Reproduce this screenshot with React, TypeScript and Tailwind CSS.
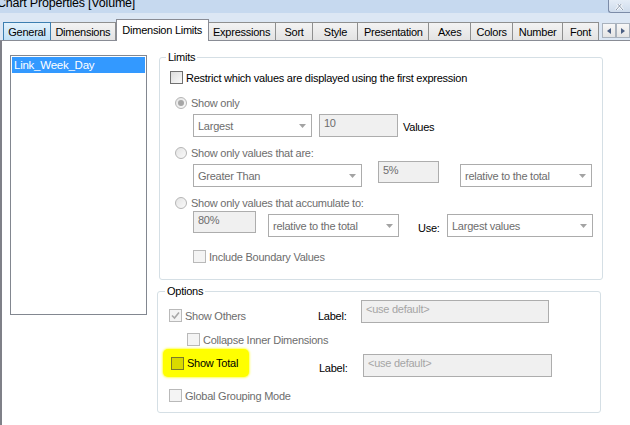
import React from "react";

const tabs: { label: string; w: string; kind: "normal" | "hover" | "selected" }[] = [
  { label: "General", w: "w-[48px]", kind: "hover" },
  { label: "Dimensions", w: "w-[65px]", kind: "normal" },
  { label: "Dimension Limits", w: "w-[93px]", kind: "selected" },
  { label: "Expressions", w: "w-[67px]", kind: "normal" },
  { label: "Sort", w: "w-[38px]", kind: "normal" },
  { label: "Style", w: "w-[45px]", kind: "normal" },
  { label: "Presentation", w: "w-[71px]", kind: "normal" },
  { label: "Axes", w: "w-[42px]", kind: "normal" },
  { label: "Colors", w: "w-[42px]", kind: "normal" },
  { label: "Number", w: "w-[50px]", kind: "normal" },
  { label: "Font", w: "w-[36px]", kind: "normal" },
];

function Check({ checked, disabled, yellow }: { checked?: boolean; disabled?: boolean; yellow?: boolean }) {
  const cls = yellow
    ? "border-[#7a7a2a] bg-[#d9d900]"
    : disabled
    ? "border-[#b9b9b9] bg-[#f4f4f4]"
    : "border-[#707070] bg-gradient-to-br from-[#dcdcdc] to-[#fafafa]";
  return (
    <div className={`w-[13px] h-[13px] shrink-0 border flex items-center justify-center ${cls}`}>
      {checked && (
        <svg width="9" height="9" viewBox="0 0 9 9">
          <path d="M1 4.5 L3.5 7 L8 1.5" stroke="#a8a8a8" strokeWidth="1.6" fill="none" />
        </svg>
      )}
    </div>
  );
}

function Radio({ selected }: { selected?: boolean }) {
  return (
    <div className="w-[12px] h-[12px] shrink-0 rounded-full border border-[#b5b5b5] bg-gradient-to-br from-[#e4e4e4] to-[#fafafa] flex items-center justify-center">
      {selected && <div className="w-[6px] h-[6px] rounded-full bg-[#a6a6a6]" />}
    </div>
  );
}

function Combo({ text, w, extra = "" }: { text: string; w: string; extra?: string }) {
  return (
    <div className={`${w} h-[23px] shrink-0 border border-[#acacac] bg-white flex items-center pl-[4px] pr-[5px] ${extra}`}>
      <span className="flex-1 text-[#6d6d6d] whitespace-nowrap">{text}</span>
      <svg width="7" height="4" viewBox="0 0 7 4">
        <path d="M0 0 H7 L3.5 4 Z" fill="#a3a3a3" />
      </svg>
    </div>
  );
}

function Input({ text, w, h = "h-[23px]", light, extra = "" }: { text: string; w: string; h?: string; light?: boolean; extra?: string }) {
  return (
    <div
      className={`${w} ${h} shrink-0 border border-[#adadad] bg-[#f0f0f0] pl-[4px] pt-[1px] leading-[15px] whitespace-nowrap ${
        light ? "text-[#a5a5a5]" : "text-[#6d6d6d]"
      } ${extra}`}
    >
      {text}
    </div>
  );
}

export default function App() {
  return (
    <div className="w-[630px] h-[425px] overflow-hidden bg-white text-[11px] tracking-[-0.25px] leading-[14px] text-black font-['Liberation_Sans',Arial,sans-serif] flex flex-col">
      {/* Title bar */}
      <div className="h-[13px] shrink-0 bg-[#c6d9ef] flex overflow-hidden">
        <div className="flex-1 overflow-hidden">
          <div className="ml-[-3px] mt-[-4px] text-[12.5px] leading-[14px] tracking-[-0.2px] whitespace-nowrap text-black">Chart Properties [Volume]</div>
        </div>
        <div className="w-[22px] h-[13px] border-l border-b border-[#7c8ca8] rounded-bl-[3px] bg-gradient-to-b from-[#e4ecf6] to-[#cfdcec] flex items-end justify-center pb-[2px]">
          <svg width="10" height="6" viewBox="0 0 10 6">
            <path d="M1 -2 L8 6 M8 -2 L1 6" stroke="#ffffff" strokeWidth="2.4" />
            <path d="M1 -2 L8 6 M8 -2 L1 6" stroke="#8a98ad" strokeWidth="1" />
          </svg>
        </div>
      </div>
      {/* band */}
      <div className="h-[6px] shrink-0 bg-[#dce7f4]" />
      {/* Tabs */}
      <div className="h-[22px] shrink-0 bg-[#dce7f4] border-b border-[#898c95] flex items-end pl-[3px]">
        {tabs.map((t, i) => {
          if (t.kind === "selected") {
            return (
              <div
                key={i}
                className={`${t.w} h-[22px] mb-[-1px] bg-white border-t border-l border-r border-[#898c95] flex items-center justify-center pb-[2px] whitespace-nowrap relative z-10`}
              >
                {t.label}
              </div>
            );
          }
          const bg =
            t.kind === "hover"
              ? "bg-gradient-to-b from-[#e3f2fc] to-[#bfe0f6] border-[#3c7fb1] border-l"
              : "bg-gradient-to-b from-[#f3f3f3] to-[#e3e3e3] border-[#8e8f8f]";
          return (
            <div
              key={i}
              className={`${t.w} h-[18px] border-t border-r ${bg} flex items-center justify-center whitespace-nowrap overflow-hidden`}
            >
              {t.label}
            </div>
          );
        })}
        <div className="flex ml-[3px] mb-[2px]">
          <div className="w-[14px] h-[15px] border border-[#a9b2bd] bg-gradient-to-b from-[#f7f7f7] to-[#e4e4e4] flex items-center justify-center">
            <svg width="4" height="6" viewBox="0 0 4 6"><path d="M4 0 V6 L0 3 Z" fill="#4b5f83" /></svg>
          </div>
          <div className="w-[14px] h-[15px] border border-[#a9b2bd] bg-gradient-to-b from-[#f7f7f7] to-[#e4e4e4] flex items-center justify-center">
            <svg width="4" height="6" viewBox="0 0 4 6"><path d="M0 0 V6 L4 3 Z" fill="#4b5f83" /></svg>
          </div>
        </div>
      </div>
      {/* Content */}
      <div className="flex-1 flex border-l-2 border-[#7f8088]">
        {/* List */}
        <div className="ml-[8px] mt-[14px] w-[137px] h-[260px] border border-[#828790] p-[1px] shrink-0">
          <div className="h-[16px] bg-[#3399ff] text-white pl-[2px] leading-[16px] text-[11.5px]">Link_Week_Day</div>
        </div>
        {/* Right column */}
        <div className="ml-[10px] flex flex-col">
          {/* Limits */}
          <fieldset className="ml-[2px] mt-[9px] w-[444px] border border-[#d5dfe5] rounded-[3px] pb-[16px]">
            <legend className="ml-[6px] px-[2px] h-[14px] leading-[14px]">Limits</legend>
            <div className="mt-[7px] ml-[10px] h-[13px] flex items-center">
              <Check />
              <span className="ml-[3px] whitespace-nowrap">Restrict which values are displayed using the first expression</span>
            </div>
            <div className="mt-[12px] ml-[15px] h-[13px] flex items-center">
              <Radio selected />
              <span className="ml-[4px] text-[#6d6d6d]">Show only</span>
            </div>
            <div className="mt-[5px] ml-[33px] h-[23px] flex items-center">
              <Combo text="Largest" w="w-[119px]" />
              <Input text="10" w="w-[79px]" extra="ml-[7px]" />
              <span className="ml-[5px] mt-[3px]">Values</span>
            </div>
            <div className="mt-[9px] ml-[15px] h-[13px] flex items-center">
              <Radio />
              <span className="ml-[4px] text-[#6d6d6d]">Show only values that are:</span>
            </div>
            <div className="mt-[2px] ml-[33px] h-[26px] flex items-start">
              <Combo text="Greater Than" w="w-[169px]" extra="mt-[3px]" />
              <Input text="5%" w="w-[61px]" h="h-[22px]" extra="ml-[16px]" />
              <Combo text="relative to the total" w="w-[132px]" extra="mt-[3px] ml-[21px]" />
            </div>
            <div className="mt-[9px] ml-[15px] h-[13px] flex items-center">
              <Radio />
              <span className="ml-[4px] text-[#6d6d6d]">Show only values that accumulate to:</span>
            </div>
            <div className="mt-[2px] ml-[33px] h-[26px] flex items-start">
              <Input text="80%" w="w-[63px]" h="h-[22px]" />
              <Combo text="relative to the total" w="w-[131px]" extra="mt-[3px] ml-[12px]" />
              <span className="ml-[19px] w-[29px] mt-[10px]">Use:</span>
              <Combo text="Largest values" w="w-[146px]" extra="mt-[3px]" />
            </div>
            <div className="mt-[13px] ml-[33px] h-[13px] flex items-center">
              <Check disabled />
              <span className="ml-[3px] text-[#6d6d6d]">Include Boundary Values</span>
            </div>
          </fieldset>
          {/* Options */}
          <fieldset className="mt-[4px] w-[444px] border border-[#d5dfe5] rounded-[3px] pb-[10px]">
            <legend className="ml-[7px] px-[2px] h-[14px] leading-[14px]">Options</legend>
            <div className="mt-[2px] ml-[11px] h-[23px] flex items-start">
              <div className="w-[149px] mt-[9px] h-[13px] flex items-center">
                <Check checked disabled />
                <span className="ml-[3px] text-[#6d6d6d]">Show Others</span>
              </div>
              <span className="w-[43px] mt-[9px]">Label:</span>
              <Input text="<use default>" w="w-[188px]" light />
            </div>
            <div className="mt-[10px] ml-[29px] h-[13px] flex items-center">
              <Check disabled />
              <span className="ml-[3px] text-[#6d6d6d]">Collapse Inner Dimensions</span>
            </div>
            <div className="mt-[3px] ml-[5px] h-[28px] flex items-start">
              <div className="w-[86px] h-[28px] bg-[#ffff00] rounded-[5px] pl-[8px] flex items-center shadow-[0_0_2px_1px_#ffff66]">
                <Check yellow />
                <span className="ml-[3px]">Show Total</span>
              </div>
              <span className="ml-[70px] w-[44px] mt-[12px]">Label:</span>
              <Input text="<use default>" w="w-[189px]" light extra="mt-[5px]" />
            </div>
            <div className="mt-[12px] ml-[11px] h-[13px] flex items-center">
              <Check disabled />
              <span className="ml-[3px] text-[#6d6d6d]">Global Grouping Mode</span>
            </div>
          </fieldset>
        </div>
      </div>
    </div>
  );
}
